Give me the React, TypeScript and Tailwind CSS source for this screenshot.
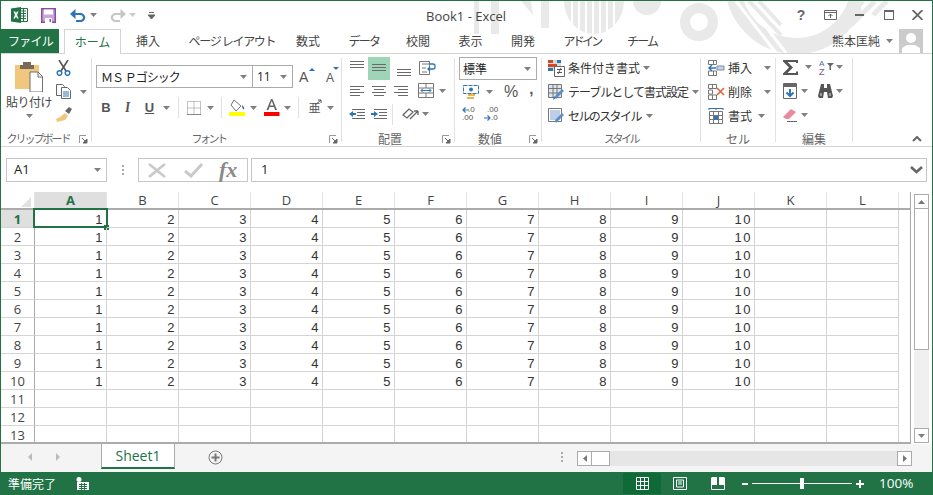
import React from "react";

const font = { fontFamily: '"Noto Sans CJK JP", "Noto Sans", sans-serif' };
const latin = { fontFamily: '"Liberation Sans", sans-serif' };
const open = { fontFamily: '"Open Sans", sans-serif' };

const Dd = ({ className = "" }: { className?: string }) => (
  <svg width="7" height="4" viewBox="0 0 7 4" className={`shrink-0 ${className}`}>
    <path d="M0 0h7L3.5 4z" fill="#808080" />
  </svg>
);

const Launcher = () => (
  <svg width="9" height="9" viewBox="0 0 9 9" className="shrink-0">
    <path d="M0.5 8V0.5H7" fill="none" stroke="#999" />
    <path d="M3 3l4 4M8 4v4H4z" stroke="#666" fill="#666" strokeWidth="1" />
  </svg>
);

const Lines = ({ w = 14, ys, xs }: { w?: number; ys: number[]; xs?: [number, number][] }) => (
  <svg width={w} height="16" viewBox={`0 0 ${w} 16`} className="shrink-0">
    {ys.map((y, i) => (
      <path key={i} d={`M${xs ? xs[i][0] : 0} ${y + 0.5}H${xs ? xs[i][1] : w}`} stroke="#6a6a6a" />
    ))}
  </svg>
);

const ExcelLogo = () => (
  <svg width="17" height="16" viewBox="0 0 17 16" className="shrink-0">
    <path d="M6 1.500h10.500v13H6z" fill="#fff" stroke="#217346" />
    <path d="M10 4h5M10 6.500h5M10 9h5M10 11.500h5M12.500 2v12" stroke="#217346" />
    <path d="M0 1.500L10 0v16L0 14.500z" fill="#217346" />
    <path d="M2.500 4.500h1.800L5 6.400l.9-1.900h1.700L6 8l1.700 3.600H6L5 9.400l-1 2.200H2.300L4 8z" fill="#fff" />
  </svg>
);

const SaveIcon = () => (
  <svg width="15" height="15" viewBox="0 0 15 15" className="shrink-0">
    <path d="M0 0h15v15H0z" fill="#8a4aa8" />
    <path d="M1.500 1.500h12v12h-12z" fill="#c9a6d8" />
    <path d="M3 1.500h9v5H3z" fill="#fff" />
    <path d="M4 10h7v5H4z" fill="#fff" />
    <path d="M8.500 11H10v3H8.500z" fill="#8a4aa8" />
  </svg>
);

const Undo = ({ color, flip }: { color: string; flip?: boolean }) => (
  <svg width="16" height="13" viewBox="0 0 16 13" className={`shrink-0 ${flip ? "-scale-x-100" : ""}`}>
    <path d="M3 5h6a4 3.500 0 0 1 2 7H6" fill="none" stroke={color} strokeWidth="2.200" />
    <path d="M5.500 0v10L0 5z" fill={color} />
  </svg>
);

const Clipboard = () => (
  <svg width="28" height="30" viewBox="0 0 28 30" className="shrink-0">
    <path d="M0 3h24v24H0z" fill="#f0c77d" />
    <path d="M8 0h8v3h3v4H5V3h3z" fill="#7a6a58" />
    <path d="M15 10h8l4.500 4.500V30H15z" fill="#fff" stroke="#6f6f6f" />
    <path d="M23 10v5h5" fill="none" stroke="#6f6f6f" />
  </svg>
);

const Scissors = () => (
  <svg width="15" height="16" viewBox="0 0 15 16" className="shrink-0">
    <path d="M3 0l7 11M12 0L5 11" stroke="#555" strokeWidth="1.600" />
    <circle cx="3.500" cy="13" r="2.300" fill="none" stroke="#2e75b6" strokeWidth="1.500" />
    <circle cx="11.500" cy="13" r="2.300" fill="none" stroke="#2e75b6" strokeWidth="1.500" />
  </svg>
);

const CopyIcon = () => (
  <svg width="15" height="15" viewBox="0 0 15 15" className="shrink-0">
    <path d="M.5.500h6l2 2v9h-8z" fill="#fff" stroke="#666" />
    <path d="M5.500 3.500h6l3 3v8h-9z" fill="#fff" stroke="#666" />
    <path d="M7 8h6M7 10h6M7 12h6" stroke="#2e75b6" />
  </svg>
);

const Brush = () => (
  <svg width="16" height="15" viewBox="0 0 16 15" className="shrink-0">
    <path d="M9 6l3 3-3 4-8 2-1-3 4-2z" fill="#f0c77d" />
    <path d="M9 4l4-4 3 2-3 5z" fill="#666" />
  </svg>
);

const BorderIcon = () => (
  <svg width="14" height="14" viewBox="0 0 14 14" className="shrink-0">
    <path d="M.5.500h13v13H.5zM7 .5v13M.5 7h13" fill="none" stroke="#888" strokeDasharray="1 1" />
    <path d="M0 13.500h14" stroke="#888" />
  </svg>
);

const FillIcon = () => (
  <svg width="17" height="17" viewBox="0 0 17 17" className="shrink-0">
    <path d="M5 1l7 6-5 5-5-6z" fill="#fff" stroke="#777" />
    <path d="M13 6c2 2 3 3 2 4s-2-1-2-4z" fill="#2e75b6" />
    <path d="M0 13h16v4H0z" fill="#ffff00" />
  </svg>
);

const ColorA = () => (
  <svg width="17" height="17" viewBox="0 0 17 17" className="shrink-0">
    <path d="M8 0h1.500L14 11h-2l-1-3H6.500l-1 3h-2zM7 6.500h3.500L8.700 2z" fill="#666" />
    <path d="M1 13h15.500v4H1z" fill="#ff0000" />
  </svg>
);

const WrapIcon = () => (
  <svg width="17" height="15" viewBox="0 0 17 15" className="shrink-0">
    <path d="M.5.500h10v13H.5z" fill="none" stroke="#777" />
    <path d="M3 3h7M3 7h4M3 11h5" stroke="#777" />
    <path d="M10 3h4a2 2 0 0 1 2 2v1a2 2 0 0 1-2 2H9M11 6l-2 2 2 2" fill="none" stroke="#2e75b6" strokeWidth="1.300" />
  </svg>
);

const MergeIcon = () => (
  <svg width="16" height="15" viewBox="0 0 16 15" className="shrink-0">
    <path d="M.5.500h15v14H.5zM.5 5h15M.5 10h15M8 .5V5M8 10v4.500" fill="none" stroke="#777" />
    <path d="M3 7.500h10M3 7.500l2-2M3 7.500l2 2M13 7.500l-2-2M13 7.500l-2 2" stroke="#2e75b6" fill="none" />
  </svg>
);

const Indent = ({ right }: { right?: boolean }) => (
  <svg width="16" height="13" viewBox="0 0 16 13" className="shrink-0">
    <path d="M3 1.500h13M8 4.500h8M8 7.500h8M3 10.500h13" stroke="#6a6a6a" />
    <path d={right ? "M7 6L3 3v2H0v2h3v2z" : "M0 6l4-3v2h3v2H4v2z"} fill="#2e75b6" />
  </svg>
);

const Orient = () => (
  <svg width="18" height="15" viewBox="0 0 18 15" className="shrink-0">
    <path d="M1 8l6-6 4 3-6 6zM8 12l8-8M16 4v4M16 4h-4" fill="none" stroke="#666" strokeWidth="1.300" />
  </svg>
);

const Accounting = () => (
  <svg width="16" height="16" viewBox="0 0 16 16" className="shrink-0">
    <path d="M.5 1.500h15v8H.5z" fill="#fff" stroke="#2e75b6" strokeDasharray="4 1" />
    <circle cx="8" cy="5.500" r="2" fill="#2e75b6" />
    <path d="M5 10h7v2H5zM4 13h7v2H4z" fill="#e8b54b" />
  </svg>
);

const Decimal = ({ inc }: { inc?: boolean }) => (
  <div className="relative w-[15px] h-[16px] text-[8px] leading-[8px] text-[#555]" style={latin}>
    <div className={inc ? "pl-[3px]" : "pl-[6px]"}>{inc ? ".00" : ".0"}</div>
    <div className={inc ? "pl-[7px]" : "pl-[0px]"}>{inc ? ".0" : ".00"}</div>
    <svg width="7" height="6" viewBox="0 0 7 6" className={inc ? "absolute left-0 top-[9px]" : "absolute left-0 top-[1px]"}>
      <path d={inc ? "M0 3h6M3.500 .5L6 3 3.500 5.500" : "M7 3H1M3.500 .5L1 3l2.500 2.500"} stroke="#2e75b6" strokeWidth="1.200" fill="none" />
    </svg>
  </div>
);

const CondIcon = () => (
  <svg width="17" height="17" viewBox="0 0 17 17" className="shrink-0">
    <path d="M0 0h13v11H0z" fill="#d9d9d9" />
    <path d="M0 0h5v3H0zM0 4h9v3H0z" fill="#d24726" />
    <path d="M9 0h4v3H9zM0 8h5v3H0z" fill="#2e75b6" />
    <path d="M6.500 6.500h10v10h-10z" fill="#fff" stroke="#666" />
    <path d="M9 9.500h5M9 12.500h5M13 8l-3 6" stroke="#555" />
  </svg>
);

const TableIcon = () => (
  <svg width="17" height="17" viewBox="0 0 17 17" className="shrink-0">
    <path d="M.5.500h13v13H.5zM.5 4.500h13M.5 9h13M5 .5v13M9 .5v13" fill="#dfe5ee" stroke="#777" />
    <path d="M8 15l8-8-2-2-7 7z" fill="#5b8fc7" />
    <path d="M6 12l2 2-3 2z" fill="#2e75b6" />
  </svg>
);

const StyleIcon = () => (
  <svg width="17" height="17" viewBox="0 0 17 17" className="shrink-0">
    <path d="M.5.500h13v13H.5z" fill="#fff" stroke="#777" />
    <path d="M2 2h10v10H2z" fill="#bccfe6" />
    <path d="M8 15l8-8-2-2-7 7z" fill="#5b8fc7" />
  </svg>
);

const InsertCell = () => (
  <svg width="17" height="16" viewBox="0 0 17 16" className="shrink-0">
    <path d="M.5.500h5v4h-5zM.5 11h5v4.500h-5zM5.500.5h3v4h-3zM5.500 11h3v4.500h-3z" fill="none" stroke="#777" />
    <path d="M9 6h7v4H9z" fill="#c5d5e8" stroke="#7a8ba0" />
    <path d="M8 8H1M4 5L1 8l3 3" stroke="#2e75b6" strokeWidth="1.400" fill="none" />
  </svg>
);

const DeleteCell = () => (
  <svg width="17" height="16" viewBox="0 0 17 16" className="shrink-0">
    <path d="M.5.500h8v4h-8zM.5 11h8v4.500h-8zM4.500.5v4M4.500 11v4.500M.5 6h4v4h-4z" fill="none" stroke="#777" />
    <path d="M9 4l7 7M16 4l-7 7" stroke="#e2613b" strokeWidth="1.600" />
  </svg>
);

const FormatCell = () => (
  <svg width="16" height="16" viewBox="0 0 16 16" className="shrink-0">
    <path d="M1.500 3.500h13v12h-13zM1.500 7.500h13M1.500 11.500h13M5.500 3.500v12M10.500 3.500v12" fill="none" stroke="#777" />
    <path d="M6 8h4v3.500H6z" fill="#2e75b6" />
    <path d="M1 .5h14M1 0v2M15 0v2M8 0v2" stroke="#2e75b6" />
  </svg>
);

const Sigma = () => (
  <svg width="16" height="15" viewBox="0 0 16 15" className="shrink-0">
    <path d="M0 0h15v3h-2V2H4.500l5.500 5.500L4.500 13H13v-1.500h2V15H0v-1.500L6 7.500 0 1.500z" fill="#555" />
  </svg>
);

const SortIcon = () => (
  <svg width="17" height="17" viewBox="0 0 17 17" className="shrink-0">
    <text x="0" y="7" fontSize="8" fill="#2e75b6" fontFamily="Liberation Sans">A</text>
    <text x="0" y="16" fontSize="9" fill="#7a4fa3" fontFamily="Liberation Sans">Z</text>
    <path d="M8 4h7l-3 3v4h-1.500V7z" fill="#666" />
  </svg>
);

const FillDown = () => (
  <svg width="14" height="16" viewBox="0 0 14 16" className="shrink-0">
    <path d="M.5.500h13v15H.5z" fill="#fff" stroke="#666" />
    <path d="M1 1h12v3H1z" fill="#666" />
    <path d="M7 6v7M3.500 9.500L7 13l3.500-3.500" stroke="#2e75b6" strokeWidth="2" fill="none" />
  </svg>
);

const Binoc = () => (
  <svg width="15" height="14" viewBox="0 0 15 14" className="shrink-0">
    <path d="M3 0h3v4h3V0h3l3 12-1 2h-4l-1-6H6l-1 6H1l-1-2z" fill="#555" />
    <path d="M2 9h2v3H2zM11 9h2v3h-2z" fill="#999" />
  </svg>
);

const Eraser = () => (
  <svg width="14" height="14" viewBox="0 0 14 14" className="shrink-0">
    <path d="M0 9l8-8 5 3-7 7H3z" fill="#ea8a9a" />
    <path d="M4 13.500h10" stroke="#666" />
  </svg>
);

const Sep = () => <div className="w-px h-[84px] bg-[#e1e1e1] mt-[4px] shrink-0" />;
const MiniSep = () => <div className="w-px h-[21px] bg-[#e1e1e1] shrink-0" />;

const Group = ({ w, label, labelCls = "", launcher, children }: { w: string; label: string; labelCls?: string; launcher?: boolean; children: React.ReactNode }) => (
  <div className={`relative flex flex-col shrink-0 h-[92px] ${w}`}>
    <div className="h-[72px] shrink-0 relative">{children}</div>
    <div className={`h-[15px] shrink-0 mt-[5px] flex items-center justify-center leading-[15px] text-[#666] whitespace-nowrap ${launcher ? "pr-[16px]" : ""} ${labelCls || "text-[12px]"}`}>{label}</div>
    {launcher && (
      <div className="absolute right-[3px] bottom-[2px] leading-[0]">
        <Launcher />
      </div>
    )}
  </div>
);

const Box = ({ w, children, cls = "" }: { w: string; children?: React.ReactNode; cls?: string }) => (
  <div className={`flex items-center justify-center shrink-0 ${w} ${cls}`}>{children}</div>
);

const cols = ["A", "B", "C", "D", "E", "F", "G", "H", "I", "J", "K", "L"];
const rows = Array.from({ length: 13 }, (_, i) => i + 1);

const TitleArt = () => (
  <svg width="933" height="53" viewBox="0 0 933 53" className="absolute left-0 top-0 pointer-events-none">
    <defs>
      <clipPath id="ringclip">
        <path d="M720 0H860V53H720z" />
      </clipPath>
    </defs>
    <g fill="#e9e9e9">
      <path d="M473 0h5v33h-5zM490 0h8v33h-8z" />
      <path d="M520 0h10l2 14z" />
      <path d="M540 0h8v27h-8z" />
      <path d="M563 0h60a30 33 0 0 1-60 0z" />
      <circle cx="646" cy="0" r="14" />
    </g>
    <path d="M571 0v33M578 0v33M585 0v33M592 0v33M599 0v33M606 0v33M613 0v33" stroke="#fff" strokeWidth="2" />
    <circle cx="698" cy="21" r="14" fill="none" stroke="#e9e9e9" strokeWidth="10" />
    <g clipPath="url(#ringclip)">
      <circle cx="795" cy="-18" r="63" fill="none" stroke="#e9e9e9" strokeWidth="16" />
      <path d="M735 0l40 52M745 0l40 52" stroke="#fff" strokeWidth="3" />
      <path d="M748 0l32 34M758 0l22 24" stroke="#e9e9e9" strokeWidth="4" />
    </g>
    <path d="M862 0l-34 34M874 0l-24 24M886 0l-14 14" stroke="#e9e9e9" strokeWidth="5" />
  </svg>
);

export default function App() {
  return (
    <div className="relative w-[933px] h-[495px] bg-white overflow-hidden border-x border-t border-[#217346] text-[#444]" style={font}>
      <TitleArt />
      {/* title bar */}
      <div className="relative h-[28px] flex items-center pl-[10px]">
        <ExcelLogo />
        <div className="ml-[13px] leading-[0]"><SaveIcon /></div>
        <div className="ml-[14px] leading-[0]"><Undo color="#2e75b6" /></div>
        <Dd className="ml-[4px]" />
        <div className="ml-[13px] leading-[0]"><Undo color="#c6c6c6" flip /></div>
        <Dd className="ml-[3px] opacity-40" />
        <div className="ml-[12px] leading-[0]">
          <svg width="7" height="7" viewBox="0 0 7 7"><path d="M1 .5h5M0 3h7L3.500 7z" stroke="#666" fill="#666" strokeWidth="1" /></svg>
        </div>
        <div className="absolute left-[425px] top-[6px] text-[13px] leading-[18px] text-[#444]" style={open}>Book1 - Excel</div>
        <div className="ml-auto flex items-center pr-[9px]">
          <div className="w-[20px] text-center text-[14px] font-bold leading-[16px] text-[#666]" style={latin}>?</div>
          <div className="ml-[13px] leading-[0]">
            <svg width="13" height="10" viewBox="0 0 13 10"><path d="M.5.500h12v9H.5zM.5 2.500h12M6.500 8V4M4.500 6l2-2 2 2" fill="none" stroke="#666" /></svg>
          </div>
          <div className="ml-[18px] w-[9px] h-[2px] bg-[#666]" />
          <div className="ml-[20px] w-[10px] h-[10px] border border-t-2 border-[#666]" />
          <div className="ml-[18px] leading-[0]">
            <svg width="11" height="10" viewBox="0 0 11 10"><path d="M.5 0l10 10M10.500 0l-10 10" stroke="#666" strokeWidth="1.800" /></svg>
          </div>
        </div>
      </div>
      {/* tabs */}
      <div className="relative h-[25px] flex items-stretch border-b border-[#d4d4d4] text-[12px]">
        <div className="w-[59px] -ml-px bg-[#217346] text-white flex items-center justify-center h-[24px] pl-[2px] tracking-[-0.8px] whitespace-nowrap">ファイル</div>
        <div className="ml-[5px] w-[57px] h-[25px] bg-white border-x border-t border-[#d4d4d4] text-[#217346] flex items-center justify-center whitespace-nowrap">ホーム</div>
        <div className="ml-[15px] flex items-center gap-[28.500px] text-[#444] h-[24px]">
          <span>挿入</span>
          <span className="w-[79px] whitespace-nowrap tracking-[-1.300px]">ページ レイアウト</span>
          <span>数式</span>
          <span className="w-[29px] whitespace-nowrap tracking-[-1.800px]">データ</span>
          <span>校閲</span>
          <span>表示</span>
          <span>開発</span>
          <span className="w-[35px] whitespace-nowrap tracking-[-2.800px]">アドイン</span>
          <span className="w-[29px] whitespace-nowrap tracking-[-1.800px]">チーム</span>
        </div>
        <div className="ml-auto flex items-center pr-[9px] h-[24px]">
          <span>熊本匡純</span>
          <Dd className="ml-[6px]" />
          <div className="ml-[6px] w-[24px] h-[24px] bg-[#cbcbcb] leading-[0] overflow-hidden">
            <svg width="24" height="24" viewBox="0 0 24 24"><circle cx="12" cy="9" r="5" fill="#fff" /><path d="M3 24v-5l5-3h8l5 3v5z" fill="#fff" /></svg>
          </div>
        </div>
      </div>
      {/* ribbon */}
      <div className="relative h-[93px] flex items-start border-b border-[#d4d4d4] bg-white">
        <Group w="w-[90px]" label="クリップボード" labelCls="text-[11px] tracking-[-2px]" launcher>
          <div className="flex h-full">
            <div className="w-[52px] flex flex-col items-center pt-[8px] pl-[4px]">
              <div className="leading-[0]"><Clipboard /></div>
              <div className="text-[12px] leading-[14px] mt-[3px] tracking-[-0.5px] whitespace-nowrap">貼り付け</div>
              <Dd className="mt-[5px]" />
            </div>
            <div className="flex flex-col pt-[6px] pl-[3px]">
              <div className="leading-[0]"><Scissors /></div>
              <div className="flex items-center gap-[9px] mt-[8px]"><CopyIcon /><Dd /></div>
              <div className="leading-[0] mt-[8px]"><Brush /></div>
            </div>
          </div>
        </Group>
        <Sep />
        <Group w="w-[249px]" label="フォント" labelCls="text-[11px] tracking-[-2.500px]" launcher>
          <div className="pl-[4px] pt-[11px]">
            <div className="flex items-center h-[23px]">
              <div className="w-[157px] h-[23px] border border-[#ababab] flex items-center pl-[4px] pr-[5px] text-[12px] text-[#222]">
                <span className="whitespace-nowrap tracking-[-1px]">ＭＳ Ｐゴシック</span>
                <Dd className="ml-auto" />
              </div>
              <div className="w-[40px] h-[23px] border border-l-0 border-[#ababab] flex items-center pl-[4px] pr-[5px] text-[12px] text-[#222]" style={open}>
                <span>11</span>
                <Dd className="ml-auto" />
              </div>
              <div className="relative ml-[6px] w-[13px] text-[14px] leading-[16px] text-[#555]" style={latin}>A
                <svg width="6" height="3" viewBox="0 0 6 3" className="absolute right-[-3px] top-[-1px]"><path d="M3 0l3 3H0z" fill="#2e75b6" /></svg>
              </div>
              <div className="relative ml-[14px] w-[10px] text-[12px] leading-[16px] mt-[3px] text-[#555]" style={latin}>A
                <svg width="6" height="3" viewBox="0 0 6 3" className="absolute right-[-3px] top-[-3px]"><path d="M0 0h6L3 3z" fill="#2e75b6" /></svg>
              </div>
            </div>
            <div className="flex items-center h-[21px] mt-[9px]" style={latin}>
              <Box w="w-[20px]" cls="text-[13px] font-bold text-[#555]">B</Box>
              <Box w="w-[23px]" cls="text-[13px] italic font-bold font-serif text-[#555]">I</Box>
              <Box w="w-[21px]" cls="text-[13px] font-bold underline text-[#555]">U</Box>
              <Box w="w-[13px]"><Dd /></Box>
              <Box w="w-[10px]"><MiniSep /></Box>
              <Box w="w-[22px]"><BorderIcon /></Box>
              <Box w="w-[10px]"><Dd /></Box>
              <Box w="w-[13px]"><MiniSep /></Box>
              <Box w="w-[19px]"><FillIcon /></Box>
              <Box w="w-[12px]"><Dd /></Box>
              <Box w="w-[24px]"><ColorA /></Box>
              <Box w="w-[9px]"><Dd /></Box>
              <Box w="w-[12px]"><MiniSep /></Box>
              <Box w="w-[21px]" cls="relative text-[12px] text-[#555]">
                <span style={font}>亜</span>
                <svg width="7" height="7" viewBox="0 0 7 7" className="absolute right-[3px] top-[0px]"><path d="M0 6L6 1M3 1h3v3" stroke="#555" fill="none" /></svg>
              </Box>
              <Box w="w-[10px]"><Dd /></Box>
            </div>
          </div>
        </Group>
        <Sep />
        <Group w="w-[112px]" label="配置" launcher>
          <div className="pt-[3px] pl-[8px]">
            <div className="flex items-center h-[23px]">
              <Box w="w-[18px]" cls="justify-start"><Lines ys={[0, 3, 6]} /></Box>
              <Box w="w-[22px] h-[23px] bg-[#9fd5b7]"><Lines ys={[3, 6, 9]} /></Box>
              <Box w="w-[28px]"><Lines ys={[8, 11, 14]} /></Box>
              <Box w="w-[18px]"><WrapIcon /></Box>
            </div>
            <div className="flex items-center h-[21px]">
              <Box w="w-[22px]" cls="justify-start"><Lines ys={[3, 6, 9, 12]} xs={[[0, 14], [0, 10], [0, 14], [0, 10]]} /></Box>
              <Box w="w-[22px]" cls="justify-start"><Lines ys={[3, 6, 9, 12]} xs={[[0, 14], [2, 12], [0, 14], [2, 12]]} /></Box>
              <Box w="w-[24px]" cls="justify-start"><Lines ys={[3, 6, 9, 12]} xs={[[0, 14], [4, 14], [0, 14], [4, 14]]} /></Box>
              <Box w="w-[16px]"><MergeIcon /></Box>
              <Dd className="ml-[5px]" />
            </div>
            <div className="flex items-center h-[22px] mt-[2px]">
              <Box w="w-[22px]" cls="justify-start -ml-px"><Indent /></Box>
              <Box w="w-[22px]" cls="justify-start"><Indent right /></Box>
              <Box w="w-[9px]" cls="justify-start -ml-[1px]"><MiniSep /></Box>
              <Box w="w-[20px]"><Orient /></Box>
              <Dd className="ml-[1px]" />
            </div>
          </div>
        </Group>
        <Sep />
        <Group w="w-[86px]" label="数値" launcher>
          <div className="pt-[3px] pl-[4px]">
            <div className="w-[78px] h-[23px] border border-[#ababab] flex items-center pl-[3px] pr-[5px] text-[12px] text-[#222]">
              <span>標準</span><Dd className="ml-auto" />
            </div>
            <div className="flex items-center h-[22px] mt-[1px]">
              <Box w="w-[20px] ml-[2px]"><Accounting /></Box>
              <Dd className="ml-[5px]" />
              <div className="ml-[11px] text-[16px] text-[#555] leading-[16px]" style={latin}>%</div>
              <div className="ml-[11px] text-[15px] font-bold text-[#555] leading-[16px] -mt-[6px]" style={latin}>,</div>
            </div>
            <div className="flex items-center h-[22px] pl-[3px] gap-[7px]">
              <Decimal /><Decimal inc />
            </div>
          </div>
        </Group>
        <Sep />
        <Group w="w-[158px]" label="スタイル" labelCls="text-[11px] tracking-[-2.500px]">
          <div className="pt-[2px] pl-[6px] text-[12px] text-[#333]">
            <div className="flex items-center h-[24px] gap-[3px] whitespace-nowrap"><CondIcon /><span>条件付き書式</span><Dd className="ml-[0px]" /></div>
            <div className="flex items-center h-[24px] gap-[3px] whitespace-nowrap"><TableIcon /><span className="tracking-[-1px]">テーブルとして書式設定</span><Dd className="ml-[1px]" /></div>
            <div className="flex items-center h-[24px] gap-[3px] whitespace-nowrap"><StyleIcon /><span className="tracking-[-1.600px]">セルのスタイル</span><Dd className="ml-[2px]" /></div>
          </div>
        </Group>
        <Sep />
        <Group w="w-[74px]" label="セル">
          <div className="pt-[2px] pl-[7px] text-[12px] text-[#333]">
            <div className="flex items-center h-[24px] gap-[3px]"><InsertCell /><span>挿入</span><Dd className="ml-[9px]" /></div>
            <div className="flex items-center h-[24px] gap-[3px]"><DeleteCell /><span>削除</span><Dd className="ml-[9px]" /></div>
            <div className="flex items-center h-[24px] gap-[3px]"><FormatCell /><span className="ml-[1px]">書式</span><Dd className="ml-[3px]" /></div>
          </div>
        </Group>
        <Sep />
        <Group w="w-[76px]" label="編集">
          <div className="pt-[1px] pl-[7px]">
            <div className="flex items-center h-[24px]">
              <Sigma /><Dd className="ml-[6px]" />
              <div className="ml-[7px] leading-[0]"><SortIcon /></div>
              <Dd className="ml-[0px]" />
            </div>
            <div className="flex items-center h-[24px]">
              <FillDown /><Dd className="ml-[4px]" />
              <div className="ml-[10px] leading-[0]"><Binoc /></div>
              <Dd className="ml-[3px]" />
            </div>
            <div className="flex items-center h-[24px]">
              <Eraser /><Dd className="ml-[4px]" />
            </div>
          </div>
        </Group>
        <Sep />
        <div className="absolute right-[10px] bottom-[4px] leading-[0]">
          <svg width="10" height="6" viewBox="0 0 10 6"><path d="M1 5l4-4 4 4" stroke="#666" strokeWidth="2" fill="none" /></svg>
        </div>
      </div>
      {/* formula bar */}
      <div className="flex items-stretch h-[24px] mt-[11px] ml-[5px] mr-[5px]">
        <div className="w-[101px] border border-[#c6c6c6] flex items-center pl-[7px] pr-[5px] text-[13px] text-[#222]" style={open}>
          A1<Dd className="ml-auto" />
        </div>
        <div className="w-[31px] flex items-center justify-center">
          <div className="flex flex-col gap-[2px]">
            <div className="w-[2px] h-[2px] bg-[#aaa]" /><div className="w-[2px] h-[2px] bg-[#aaa]" /><div className="w-[2px] h-[2px] bg-[#aaa]" />
          </div>
        </div>
        <div className="w-[110px] border border-[#c6c6c6] flex items-center pl-[9px]">
          <svg width="18" height="15" viewBox="0 0 18 15" className="shrink-0"><path d="M1 1l16 13M17 1L1 14" stroke="#c9c9c9" strokeWidth="2.600" /></svg>
          <svg width="19" height="15" viewBox="0 0 19 15" className="ml-[18px] shrink-0"><path d="M1 8l6 5L18 1" stroke="#c9c9c9" strokeWidth="3" fill="none" /></svg>
          <span className="ml-[16px] text-[22px] italic font-bold text-[#8a8a8a] leading-[20px]" style={{ fontFamily: '"Liberation Serif", serif' }}>fx</span>
        </div>
        <div className="ml-[3px] flex-1 border border-[#c6c6c6] flex items-center pl-[9px] pr-[3px] text-[13px] text-[#222]" style={open}>
          1
          <svg width="13" height="8" viewBox="0 0 13 8" className="ml-auto"><path d="M1 1l5.500 5L12 1" stroke="#666" strokeWidth="2.600" fill="none" /></svg>
        </div>
      </div>
      {/* sheet + scrollbar */}
      <div className="flex h-[252px] mt-[10px]">
        <div className="w-[910px] shrink-0 overflow-hidden border-b-2 border-r border-[#ababab]" style={open}>
          {/* header row */}
          <div className="flex h-[18px] border-b-2 border-[#ababab]">
            <div className="w-[34px] shrink-0 bg-[#fff] flex items-end justify-end pr-[3px] pb-[1px] border-r border-[#e4e4e4]">
              <svg width="10" height="10" viewBox="0 0 10 10"><path d="M10 0v10H0z" fill="#e2e2e2" /></svg>
            </div>
            {cols.map((c, i) => (
              <div key={c} className={`w-[72px] shrink-0 flex items-center justify-center text-[13px] leading-[16px] border-r border-[#e4e4e4] ${i === 0 ? "bg-[#dfdfdf] text-[#217346] font-bold" : "text-[#444]"}`}>
                {c}
              </div>
            ))}
          </div>
          {rows.map((r) => (
            <div key={r} className="flex h-[18px]">
              <div className={`w-[34px] shrink-0 flex items-center justify-center text-[13px] leading-[16px] border-r border-b border-[#ababab] border-b-[#d4d4d4] ${r === 1 ? "bg-[#dfdfdf] text-[#217346] font-bold" : "text-[#444]"}`}>
                {r}
              </div>
              {cols.map((c, i) => (
                <div key={c} className="relative w-[72px] shrink-0 flex items-center justify-end pr-[2px] pt-[1px] text-[13px] leading-[15px] tracking-[1.500px] text-[#333] border-r border-b border-[#d4d4d4]" style={latin}>
                  {r <= 10 && i < 10 ? i + 1 : ""}
                  {r === 1 && i === 0 && (
                    <>
                      <div className="absolute -left-[2px] -top-[2px] w-[75px] h-[20px] border-2 border-[#217346]" />
                      <div className="absolute left-[69px] top-[15px] w-[5px] h-[5px] bg-[#217346]" />
                    </>
                  )}
                </div>
              ))}
            </div>
          ))}
        </div>
        <div className="w-[21px] flex flex-col items-center pt-[2px] bg-white">
          <div className="w-[15px] h-[15px] shrink-0 bg-white border border-[#ababab] flex items-center justify-center">
            <svg width="7" height="4" viewBox="0 0 7 4"><path d="M3.500 0L7 4H0z" fill="#777" /></svg>
          </div>
          <div className="w-[15px] h-[141px] shrink-0 bg-white border-x border-b border-[#ababab]" />
          <div className="flex-1 w-[15px] bg-[#f0f0f0]" />
          <div className="w-[15px] h-[15px] shrink-0 bg-white border border-[#ababab] flex items-center justify-center mb-[1px]">
            <Dd />
          </div>
        </div>
      </div>
      {/* tab strip */}
      <div className="flex items-start h-[28px] bg-[#f4f4f4] pl-[100px] relative">
        <div className="absolute left-[27px] top-[9px] leading-[0]">
          <svg width="35" height="8" viewBox="0 0 35 8"><path d="M4 0v8L0 4zM28 0v8l4-4z" fill="#bbb" /></svg>
        </div>
        <div className="w-[74px] h-[25px] bg-white border-x border-[#ababab] border-b-2 border-b-[#217346] flex items-center justify-center text-[14px] text-[#217346]" style={open}>
          Sheet1
        </div>
        <div className="ml-[33px] mt-[6px] leading-[0]">
          <svg width="15" height="15" viewBox="0 0 15 15"><circle cx="7.500" cy="7.500" r="6.500" fill="none" stroke="#777" /><path d="M7.500 3.500v8M3.500 7.500h8" stroke="#777" strokeWidth="2" /></svg>
        </div>
        <div className="ml-[338px] mt-[8px] flex flex-col gap-[2px]">
          <div className="w-[2px] h-[2px] bg-[#aaa]" /><div className="w-[2px] h-[2px] bg-[#aaa]" /><div className="w-[2px] h-[2px] bg-[#aaa]" />
        </div>
        <div className="ml-[14px] mt-[7px] w-[335px] h-[15px] flex bg-[#e6e6e6]">
          <div className="w-[15px] h-[15px] bg-white border border-[#ababab] flex items-center justify-center">
            <svg width="4" height="7" viewBox="0 0 4 7"><path d="M0 3.500L4 0v7z" fill="#777" /></svg>
          </div>
          <div className="w-[18px] h-[15px] bg-white border-y border-r border-[#ababab]" />
          <div className="ml-auto w-[15px] h-[15px] bg-white border border-[#ababab] flex items-center justify-center">
            <svg width="4" height="7" viewBox="0 0 4 7"><path d="M4 3.500L0 0v7z" fill="#777" /></svg>
          </div>
        </div>
      </div>
      {/* status bar */}
      <div className="h-[23px] -mx-px bg-[#217346] text-white flex items-center pl-[8px] text-[12px] relative">
        <span className="w-[48px]">準備完了</span>
        <div className="ml-[20px] leading-[0]">
          <svg width="13" height="13" viewBox="0 0 13 13"><circle cx="3" cy="2.500" r="2.500" fill="#fff" /><path d="M1 5h12v8H1z" fill="#fff" /><path d="M3 7.500h8M3 9.500h8M3 11.500h8M5.500 6v7M8.500 6v7" stroke="#217346" /></svg>
        </div>
        <div className="ml-[534px] w-[38px] h-[21px] bg-[#0f6a37] flex items-center justify-center">
          <svg width="13" height="13" viewBox="0 0 13 13"><path d="M.5.500h12v12H.5zM4.500.5v12M8.500.5v12M.5 4.500h12M.5 8.500h12" fill="none" stroke="#fff" /></svg>
        </div>
        <div className="ml-[12px] leading-[0]">
          <svg width="14" height="13" viewBox="0 0 14 13"><path d="M.5.500h13v12H.5z" fill="none" stroke="#fff" /><path d="M3.500 3h7v7h-7zM5 5h4M5 7h4" fill="none" stroke="#fff" /></svg>
        </div>
        <div className="ml-[24px] leading-[0]">
          <svg width="14" height="13" viewBox="0 0 14 13"><path d="M.5 12.500h13V.5M.5 12.500V.5" fill="none" stroke="#fff" /><path d="M1 0h5v8H1zM8 0h5v8H8z" fill="#fff" /></svg>
        </div>
        <div className="ml-[17px] w-[6px] h-[2px] bg-white" />
        <div className="relative ml-[4px] w-[100px] h-px bg-white">
          <div className="absolute left-[48px] -top-[5px] w-[4px] h-[11px] bg-white" />
        </div>
        <div className="ml-[4px] leading-[0]">
          <svg width="8" height="8" viewBox="0 0 8 8"><path d="M4 0v8M0 4h8" stroke="#fff" strokeWidth="2" /></svg>
        </div>
        <span className="ml-[15px] text-[13.500px]" style={open}>100%</span>
      </div>
    </div>
  );
}
